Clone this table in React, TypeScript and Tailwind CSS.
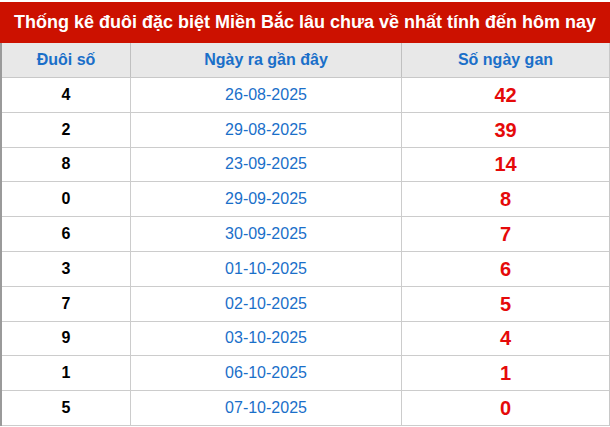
import React from "react";

const rows = [
  ["4", "26-08-2025", "42"],
  ["2", "29-08-2025", "39"],
  ["8", "23-09-2025", "14"],
  ["0", "29-09-2025", "8"],
  ["6", "30-09-2025", "7"],
  ["3", "01-10-2025", "6"],
  ["7", "02-10-2025", "5"],
  ["9", "03-10-2025", "4"],
  ["1", "06-10-2025", "1"],
  ["5", "07-10-2025", "0"],
];

export default function App() {
  return (
    <div className="w-[610px] h-[427px] bg-white pt-[2px] overflow-hidden" style={{ fontFamily: '"Liberation Sans", Arial, sans-serif' }}>
      <div className="h-[41px] bg-[#cc1100] text-white font-bold text-[18px] flex items-center justify-center">
        Thống kê đuôi đặc biệt Miền Bắc lâu chưa về nhất tính đến hôm nay
      </div>
      <div className="border-l-2 border-l-[#9a9a9a] border-r border-r-[#c8c8c8]">
        <div className="flex h-[35px] bg-[#e8e8e8] border-b border-[#c8c8c8] text-[#1a6fc9] font-bold text-[16px]">
          <div className="w-[129px] flex items-center justify-center border-r border-[#c0c0c0]">Đuôi số</div>
          <div className="w-[271px] flex items-center justify-center border-r border-[#c0c0c0]">Ngày ra gần đây</div>
          <div className="flex-1 flex items-center justify-center">Số ngày gan</div>
        </div>
        {rows.map((r, i) => (
          <div key={i} className="flex h-[34.8px] border-b border-[#cccccc]">
            <div className="w-[129px] flex items-center justify-center border-r border-[#cccccc] font-bold text-[16px] text-black">{r[0]}</div>
            <div className="w-[271px] flex items-center justify-center border-r border-[#cccccc] text-[16px] text-[#1a6fc9]">{r[1]}</div>
            <div className="flex-1 flex items-center justify-center font-bold text-[20px] text-[#e50a0a]">{r[2]}</div>
          </div>
        ))}
      </div>
    </div>
  );
}
